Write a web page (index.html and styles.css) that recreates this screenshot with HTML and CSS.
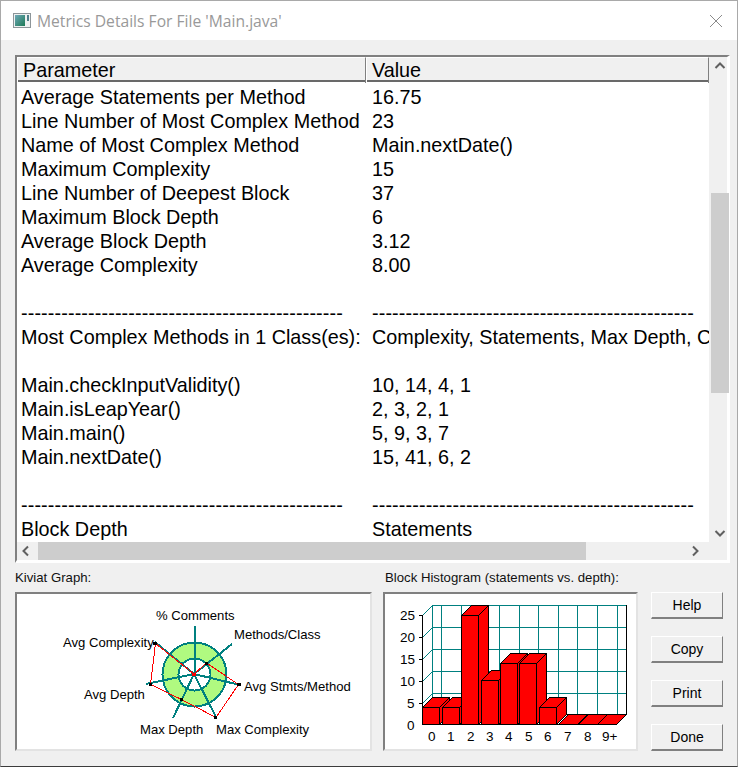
FILE: index.html
```html
<!DOCTYPE html>
<html lang="en">
<head>
<meta charset="utf-8">
<title>Metrics Details For File 'Main.java'</title>
<link rel="stylesheet" href="styles.css">
</head>
<body>
<div class="window">
  <header class="titlebar">
    <svg class="app-icon" width="18" height="15" viewBox="0 0 18 15">
      <defs><linearGradient id="ic" x1="0" y1="0" x2="1" y2="1"><stop offset="0" stop-color="#6fa8b8"/><stop offset="1" stop-color="#1c7a55"/></linearGradient></defs>
      <rect x="0.5" y="0.5" width="17" height="14" fill="#eef1f1" stroke="#8d9599"/>
      <rect x="2" y="2" width="10" height="11" fill="url(#ic)"/>
      <rect x="14" y="2" width="2" height="6" fill="#4f7f8a"/>
    </svg>
    <span class="title">Metrics Details For File 'Main.java'</span>
    <svg class="close" width="14" height="14" viewBox="0 0 14 14"><path d="M1 1 13 13M13 1 1 13" stroke="#8a8a8a" stroke-width="1" fill="none"/></svg>
  </header>
  <main class="body">
    <section class="listview">
      <div class="list-top">
        <div class="list-main">
          <div class="head">
            <div class="head-cell">Parameter</div>
            <div class="head-cell">Value</div>
          </div>
          <div class="rows">
            <div class="row"><span>Average Statements per Method</span><span>16.75</span></div>
            <div class="row"><span>Line Number of Most Complex Method</span><span>23</span></div>
            <div class="row"><span>Name of Most Complex Method</span><span>Main.nextDate()</span></div>
            <div class="row"><span>Maximum Complexity</span><span>15</span></div>
            <div class="row"><span>Line Number of Deepest Block</span><span>37</span></div>
            <div class="row"><span>Maximum Block Depth</span><span>6</span></div>
            <div class="row"><span>Average Block Depth</span><span>3.12</span></div>
            <div class="row"><span>Average Complexity</span><span>8.00</span></div>
            <div class="row"></div>
            <div class="row dashes"><span>------------------------------------------------</span><span>------------------------------------------------</span></div>
            <div class="row"><span>Most Complex Methods in 1 Class(es):</span><span>Complexity, Statements, Max Depth, Calls</span></div>
            <div class="row"></div>
            <div class="row"><span>Main.checkInputValidity()</span><span>10, 14, 4, 1</span></div>
            <div class="row"><span>Main.isLeapYear()</span><span>2, 3, 2, 1</span></div>
            <div class="row"><span>Main.main()</span><span>5, 9, 3, 7</span></div>
            <div class="row"><span>Main.nextDate()</span><span>15, 41, 6, 2</span></div>
            <div class="row"></div>
            <div class="row dashes"><span>------------------------------------------------</span><span>------------------------------------------------</span></div>
            <div class="row"><span>Block Depth</span><span>Statements</span></div>
          </div>
        </div>
        <div class="vscroll">
          <svg class="arrow" width="18" height="18" viewBox="0 0 18 18"><path d="M4.5 11 9 6.5 13.5 11" fill="none" stroke="#606060" stroke-width="2"/></svg>
          <div class="vtrack"><div class="vthumb"></div></div>
          <svg class="arrow" width="18" height="18" viewBox="0 0 18 18"><path d="M4.5 7 9 11.5 13.5 7" fill="none" stroke="#606060" stroke-width="2"/></svg>
        </div>
      </div>
      <div class="hscroll">
        <svg class="arrow" width="21" height="18" viewBox="0 0 21 18"><path d="M11 4.5 6.5 9 11 13.5" fill="none" stroke="#606060" stroke-width="2"/></svg>
        <div class="hthumb"></div>
        <svg class="arrow" width="18" height="18" viewBox="0 0 18 18"><path d="M7 4.5 11.5 9 7 13.5" fill="none" stroke="#606060" stroke-width="2"/></svg>
      </div>
    </section>
    <section class="lower">
      <div class="pane pane-kiviat">
        <div class="pane-label">Kiviat Graph:</div>
        <div class="chart">
          <svg width="353" height="155" viewBox="17 594 353 155" class="chart-svg">
            <g shape-rendering="crispEdges">
              <circle cx="194.5" cy="674.5" r="24" fill="none" stroke="#b0fa80" stroke-width="17"/>
              <circle cx="194.5" cy="674.5" r="32" fill="none" stroke="#008080" stroke-width="2"/>
              <circle cx="194.5" cy="674.5" r="16" fill="none" stroke="#008080" stroke-width="2"/>
              <path d="M194.5 674V626M194 674 232 644M194 674 240 685M194 674 216 717M194 674 173 718M194 674 146 684M194 674 155 642" stroke="#008080" stroke-width="2" fill="none"/>
              <path d="M155.5 643.5 194 674 206.5 663 238.5 684.5 216 717.5 181.5 699.5 150.5 684.5Z" fill="none" stroke="#ff0000" stroke-width="1"/>
            </g>
            <g fill="#000">
              <rect x="153" y="642" width="4" height="3"/><rect x="205" y="662" width="3" height="3"/><rect x="237" y="683" width="4" height="3"/><rect x="214" y="716" width="3" height="3"/><rect x="180" y="698" width="3" height="3"/><rect x="149" y="683" width="3" height="3"/>
            </g>
            <rect x="192" y="673" width="4" height="3" fill="#ff0000"/>
            <g class="chart-text">
              <text x="156" y="620">% Comments</text>
              <text x="234" y="639">Methods/Class</text>
              <text x="63" y="647">Avg Complexity</text>
              <text x="244" y="691">Avg Stmts/Method</text>
              <text x="84" y="699">Avg Depth</text>
              <text x="140" y="734">Max Depth</text>
              <text x="216" y="734">Max Complexity</text>
            </g>
          </svg>
        </div>
      </div>
      <div class="pane pane-hist">
        <div class="pane-label">Block Histogram (statements vs. depth):</div>
        <div class="chart">
          <svg width="251" height="155" viewBox="385 594 251 155" class="chart-svg">
            <g stroke="#008080" stroke-width="1" fill="none" shape-rendering="crispEdges">
              <path d="M432.5 605.5H626.5M432.5 627.5H626.5M432.5 649.5H626.5M432.5 671.5H626.5M432.5 693.5H626.5"/>
              <path d="M432.5 605V714M441.5 605V714M461.5 605V714M480.5 605V714M499.5 605V714M519.5 605V714M538.5 605V714M558.5 605V714M577.5 605V714M597.5 605V714M617.5 605V714"/>
              <path d="M422.5 615.5 432.5 605.5M422.5 637.5 432.5 627.5M422.5 659.5 432.5 649.5M422.5 681.5 432.5 671.5M422.5 703.5 432.5 693.5"/>
            </g>
            <path d="M626.5 605V714.5M432.5 714.5H626.5" stroke="#000" fill="none" shape-rendering="crispEdges"/>
            <g class="bars" fill="#ff0000" stroke="#000" stroke-width="1" shape-rendering="crispEdges">
              <path d="M558.5 724.5 568.5 714.5H587.5L577.5 724.5ZM578.5 724.5 588.5 714.5H607.5L597.5 724.5ZM597.5 724.5 607.5 714.5H626.5L616.5 724.5Z"/>
              <path d="M422.5 707.5 432.5 697.5H449.5L439.5 707.5ZM439.5 707.5 449.5 697.5V714.5L439.5 724.5ZM422.5 707.5H439.5V724.5H422.5Z"/>
              <path d="M442.5 707.5 452.5 697.5H469.5L459.5 707.5ZM459.5 707.5 469.5 697.5V714.5L459.5 724.5ZM442.5 707.5H459.5V724.5H442.5Z"/>
              <path d="M461.5 615.5 471.5 605.5H488.5L478.5 615.5ZM478.5 615.5 488.5 605.5V714.5L478.5 724.5ZM461.5 615.5H478.5V724.5H461.5Z"/>
              <path d="M481.5 680.5 491.5 670.5H508.5L498.5 680.5ZM498.5 680.5 508.5 670.5V714.5L498.5 724.5ZM481.5 680.5H498.5V724.5H481.5Z"/>
              <path d="M500.5 663.5 510.5 653.5H527.5L517.5 663.5ZM517.5 663.5 527.5 653.5V714.5L517.5 724.5ZM500.5 663.5H517.5V724.5H500.5Z"/>
              <path d="M519.5 663.5 529.5 653.5H546.5L536.5 663.5ZM536.5 663.5 546.5 653.5V714.5L536.5 724.5ZM519.5 663.5H536.5V724.5H519.5Z"/>
              <path d="M539.5 707.5 549.5 697.5H566.5L556.5 707.5ZM556.5 707.5 566.5 697.5V714.5L556.5 724.5ZM539.5 707.5H556.5V724.5H539.5Z"/>
            </g>
            <path d="M422.5 615V724.5H616.5" stroke="#000" fill="none" shape-rendering="crispEdges"/>
            <path d="M419 615.5H423M419 637.5H423M419 659.5H423M419 681.5H423M419 703.5H423" stroke="#000" fill="none" shape-rendering="crispEdges"/>
            <g class="chart-text hist-text">
              <text x="400" y="620">25</text><text x="400" y="642">20</text><text x="400" y="664">15</text><text x="400" y="686">10</text><text x="407" y="708">5</text><text x="407" y="730">0</text>
              <text x="428" y="741">0</text><text x="447" y="741">1</text><text x="467" y="741">2</text><text x="486" y="741">3</text><text x="505" y="741">4</text><text x="525" y="741">5</text><text x="544" y="741">6</text><text x="564" y="741">7</text><text x="584" y="741">8</text><text x="602" y="741">9+</text>
            </g>
          </svg>
        </div>
      </div>
      <div class="buttons">
        <button class="btn">Help</button>
        <button class="btn">Copy</button>
        <button class="btn">Print</button>
        <button class="btn">Done</button>
      </div>
    </section>
  </main>
</div>
</body>
</html>
```

FILE: styles.css
```css
* { box-sizing: border-box; }
html, body { margin: 0; padding: 0; }
body { width: 738px; height: 767px; overflow: hidden; background: #f0f0f0; font-family: "Liberation Sans", Arial, sans-serif; color: #000; }
.window { width: 738px; height: 767px; display: flex; flex-direction: column; border: 1px solid #a9a9a9; border-bottom-color: #3c3c3c; }
.titlebar { height: 39px; flex: none; background: #fff; display: flex; align-items: center; padding: 0 14px 0 12px; }
.app-icon { flex: none; }
.title { margin-left: 6px; font: 15.65px "Open Sans", "Liberation Sans", sans-serif; color: #999; flex: 1; }
.close { flex: none; }
.body { flex: 1; display: flex; flex-direction: column; padding: 15px 7px 0 14px; }
.listview { height: 508px; flex: none; border-top: 2px solid #808080; border-left: 2px solid #808080; border-right: 3px solid #fff; border-bottom: 3px solid #fff; background: #f0f0f0; display: flex; flex-direction: column; }
.list-top { display: flex; height: 485px; flex: none; }
.list-main { width: 692px; flex: none; background: #fff; overflow: hidden; display: flex; flex-direction: column; }
.head { height: 25px; flex: none; display: grid; grid-template-columns: 349px 1fr; background: #f0f0f0; border-bottom: 2px solid #696969; font-size: 19.8px; line-height: 25px; }
.head-cell { padding-left: 5px; border-top: 1px solid #fff; border-left: 1px solid #fff; border-right: 1px solid #808080; white-space: nowrap; }
.rows { padding-top: 3px; overflow: hidden; height: 460px; }
.row { display: grid; grid-template-columns: 351px 1fr; height: 24px; line-height: 24px; font-size: 19.8px; padding-left: 4px; white-space: nowrap; }
.dashes { letter-spacing: 0.12px; }
.row span { display: block; }
.vscroll { width: 18px; margin-left: 2px; flex: none; display: flex; flex-direction: column; }
.vtrack { flex: 1; padding-top: 118px; }
.vthumb { height: 200px; background: #cdcdcd; }
.arrow { display: block; flex: none; }
.hscroll { height: 18px; flex: none; display: flex; }
.hthumb { width: 548px; background: #cdcdcd; margin-right: 100px; }
.lower { display: flex; }
.pane { display: flex; flex-direction: column; flex: none; }
.pane-label { height: 29px; padding-top: 7px; font-size: 13.2px; line-height: 15px; color: #111; white-space: nowrap; }
.pane-kiviat { width: 368px; }
.pane-kiviat .chart { width: 357px; }
.pane-hist .pane-label { padding-left: 2px; }
.pane-hist { width: 268px; }
.pane-hist .chart { width: 255px; }
.chart { height: 159px; background: #fff; border-top: 2px solid #808080; border-left: 2px solid #808080; border-right: 2px solid #e3e3e3; border-bottom: 2px solid #e3e3e3; }
.chart-svg { display: block; }
.chart-text text { font-family: "Liberation Sans", Arial, sans-serif; font-size: 13.1px; fill: #000; }
.hist-text text { font-size: 13.5px; }
.buttons { display: flex; flex-direction: column; gap: 17px; padding-top: 29px; flex: none; width: 72px; }
.btn { height: 27px; width: 72px; padding: 0; background: #f0f0f0; border: 0; border-top: 1px solid #fff; border-left: 1px solid #fff; border-right: 1px solid #808080; border-bottom: 2px solid #808080; font: 14px "Liberation Sans", Arial, sans-serif; color: #000; }
```
